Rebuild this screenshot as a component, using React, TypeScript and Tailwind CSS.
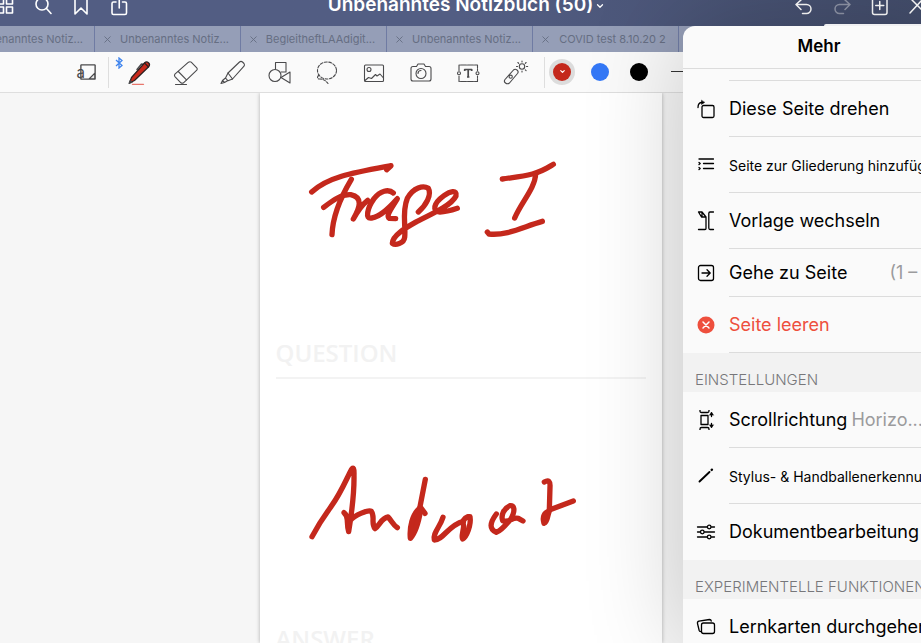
import type { ReactNode } from "react"
import { ChevronDown, X } from "lucide-react"

const tabs = [
  { id: 1, title: "Unbenanntes Notiz..." },
  { id: 2, title: "Unbenanntes Notiz..." },
  { id: 3, title: "BegleitheftLAAdigit..." },
  { id: 4, title: "Unbenanntes Notiz..." },
  { id: 5, title: "COVID test 8.10.20 2" },
]

function Icon({ size = 28, width = 1.1, children }: { size?: number; width?: number; children: ReactNode }) {
  return (
    <svg
      width={size}
      height={size}
      viewBox={`0 0 ${size} ${size}`}
      fill="none"
      stroke="currentColor"
      strokeWidth={width}
      strokeLinecap="round"
      strokeLinejoin="round"
      className="shrink-0"
      aria-hidden="true"
    >
      {children}
    </svg>
  )
}

const navLeft = [
  {
    label: "Übersicht",
    icon: (
      <>
        <rect x="5.5" y="5" width="6" height="6" />
        <rect x="14.5" y="5" width="6" height="6" />
        <rect x="5.5" y="14" width="6" height="6" />
        <rect x="14.5" y="14" width="6" height="6" />
      </>
    ),
  },
  {
    label: "Suchen",
    icon: (
      <>
        <circle cx="12" cy="11" r="6" />
        <path d="M16.500 15.500 21 20.500" />
      </>
    ),
  },
  { label: "Lesezeichen", icon: <path d="M7 2v19l6-6 6 6V2z" /> },
  {
    label: "Teilen",
    icon: (
      <>
        <path d="M10 9H7.500Q6 9 6 10.500V20q0 1.500 1.500 1.500h11.500q1.500 0 1.500-1.500v-9.500Q20.500 9 19 9h-2.500" />
        <path d="M13.250 15V2" />
      </>
    ),
  },
]

const navRight = [
  { label: "Rückgängig", icon: <path d="M10 7l-5 4.500 5 5M5.500 11.500h10a4.500 4.500 0 0 1 0 9h-4" /> },
  { label: "Wiederholen", dim: true, icon: <path d="M16 7l5 4.500-5 5M20.500 11.500h-10a4.500 4.500 0 0 0 0 9h4" /> },
  {
    label: "Seite hinzufügen",
    icon: (
      <>
        <path d="M5.500 4v15.500q0 2 2 2h10.500q2 0 2-2V4" />
        <path d="M12.750 8.500v8M8.750 12.500h8" />
      </>
    ),
  },
  { label: "Stiftmodus", icon: <path d="M5 20 19 5M7 7l13 13" /> },
]

const tools = [
  {
    label: "Stift",
    icon: (
      <>
        <path d="M19.500 5.500l-3-.5-4.500 5.500" strokeWidth="1.500" />
        <path d="M4.500 24l2-5.500L19.500 4q2-2 4-.2t.2 4L9.500 21.500z" fill="#c9291c" stroke="#2b2020" strokeWidth="1.200" />
        <path d="M4 24.500l1.200-3 2 1.800z" fill="#222" />
        <path d="M19.500 4l4 4" stroke="#2b2020" />
        <path d="M7.500 25.300h11" stroke="#e8766c" strokeWidth="1.300" />
      </>
    ),
  },
  {
    label: "Radierer",
    icon: (
      <>
        <path d="M16.500 3.200q1.500-1 2.700 0l5.600 5.600q1 1.200 0 2.400L11.500 23.800q-1.300 1-2.600 0l-6-6.200q-.9-1.200 0-2.400z" />
        <path d="M6.300 12.500l8.200 8.400M3.500 25.500h11" />
      </>
    ),
  },
  {
    label: "Textmarker",
    icon: (
      <>
        <path d="M9 14 20.500 3q1.500-1.300 3 0l1.500 1.500q1 1.300 0 2.700L13.500 20z" />
        <path d="M9 14l-2.500 5 2.500 2.800 4.500-1.800M6.500 19 3.500 21.500l2 2 3-1.700M3.500 21.500l-1.500 3 3.500-1" />
      </>
    ),
  },
  {
    label: "Formen",
    icon: (
      <>
        <path d="M9.500 10V3.500h10.500V13h-5" />
        <circle cx="9" cy="16.500" r="6" />
        <path d="M15 18.500l9-5.500v11z" />
      </>
    ),
  },
  {
    label: "Lasso",
    icon: (
      <>
        <ellipse cx="14" cy="11.500" rx="9.500" ry="8.500" strokeDasharray="2.800 1.600" />
        <path d="M6 16q-3 3 0 4 5-.5 9 4.500" strokeDasharray="3 1.500" />
      </>
    ),
  },
  {
    label: "Bild",
    icon: (
      <>
        <rect x="4.500" y="6" width="19" height="16.500" rx="1" />
        <circle cx="9" cy="10.500" r="2" />
        <path d="M5 21.500l3.500-3 3 1 4-4 1.500 1.500 3-2 3.500 4" />
      </>
    ),
  },
  {
    label: "Kamera",
    icon: (
      <>
        <path d="M6 7.500h3.500l1.500-2.500h6l1.500 2.500h3.500q2 0 2 2v10.500q0 2-2 2h-16q-2 0-2-2V9.500q0-2 2-2z" />
        <circle cx="14" cy="14.500" r="5" />
        <path d="M11 14.500q0-3 3-3" />
      </>
    ),
  },
  {
    label: "Text",
    icon: (
      <>
        <path d="M5 11.500V6h18.500v5.500M5 17v5.500h18.500V17" strokeDasharray="6 1" />
        <circle cx="5" cy="14.300" r="1.500" />
        <circle cx="23.500" cy="14.300" r="1.500" />
        <path d="M10.700 12v-1.500h7V12M14.200 10.500v7.500M13 18h2.400" strokeWidth="1.700" strokeLinecap="butt" />
      </>
    ),
  },
  {
    label: "Laserpointer",
    icon: (
      <>
        <path d="M4 20.500 12.500 11q1.500-1.500 3.500 0t.5 3.500L8.500 24q-2 1.500-4 0t-.5-3.500z" />
        <circle cx="9.700" cy="17.700" r="1.600" />
        <circle cx="21" cy="7.500" r="2.700" />
        <path d="M21 3V2M21 13v-1M25.500 7.500h1.200M15.500 7.500h1M24.300 4.300l.8-.8M17.700 4.300l-.8-.8M24.300 10.800l.8.8" />
      </>
    ),
  },
]

type Row = {
  label: string
  icon: ReactNode
  small?: boolean
  danger?: boolean
  short?: boolean
  plain?: boolean
  value?: string
  gap?: string
}

const pageRows: Row[] = [
  {
    label: "Diese Seite drehen",
    icon: (
      <>
        <rect x="6" y="6.500" width="12" height="12" rx="1.500" />
        <path d="M2 8.500Q2 3.500 6 3.500" />
        <path d="M5.500 1.500v4L8.500 3.500z" fill="currentColor" strokeWidth=".5" />
      </>
    ),
  },
  {
    label: "Seite zur Gliederung hinzufüg",
    small: true,
    icon: (
      <path d="M3 4h14.500M7.500 8.500h10M7.500 13.500h10M3 7.500l1.200 1L3 9.500M3 12.500l1.200 1L3 14.500" />
    ),
  },
  {
    label: "Vorlage wechseln",
    icon: (
      <>
        <path d="M2.500 1h3.500l4 5v11.500q0 1-1 1H2.500M6 1v5h4M2.500 1l3 5" />
        <path d="M17.500 1h-3.500q-1.200 0-1.200 1.500v14.500q0 1.500 1.200 1.500h3.500" />
      </>
    ),
  },
  {
    label: "Gehe zu Seite",
    short: true,
    value: "(1 – 2)",
    gap: "ml-[42px]",
    icon: (
      <>
        <rect x="2.500" y="2.500" width="15" height="15" rx="2" />
        <path d="M6 10h8M11 6.800l3.200 3.200-3.200 3.200" />
      </>
    ),
  },
  {
    label: "Seite leeren",
    danger: true,
    icon: (
      <>
        <circle cx="10" cy="10" r="8.500" fill="#ee4f3d" stroke="none" />
        <path d="M7 7l6 6M13 7l-6 6" stroke="#fff" strokeWidth="1.500" />
      </>
    ),
  },
]

const settingRows: Row[] = [
  {
    label: "Scrollrichtung",
    value: "Horizo...",
    gap: "ml-1",
    icon: (
      <>
        <rect x="5" y="5.500" width="7" height="9" />
        <path d="M4 0v1q0 1.500 1.500 1.500H11.500Q13 2.500 13 1V0M4 20v-1q0-1.500 1.500-1.500H11.500q1.500 0 1.500 1.500v1" />
        <path d="M15.500 3v3.500M15.500 13.500V17" />
        <path d="M13.500 5l2-3 2 3zM13.500 15l2 3 2-3z" fill="currentColor" strokeWidth=".4" />
      </>
    ),
  },
  {
    label: "Stylus- & Handballenerkennu",
    small: true,
    icon: (
      <>
        <path d="M3.500 15.500 13.500 6" strokeWidth="1.900" />
        <path d="M15.700 3.900l.2-.2" strokeWidth="2.400" />
      </>
    ),
  },
  {
    label: "Dokumentbearbeitung",
    plain: true,
    icon: (
      <>
        <path d="M1.500 5h9.500M15.500 5h3M1.500 10h2.500M8.500 10h10M1.500 15h9.500M15.500 15h3" />
        <circle cx="13.200" cy="5" r="1.800" />
        <circle cx="6.300" cy="10" r="1.800" />
        <circle cx="13.200" cy="15" r="1.800" />
      </>
    ),
  },
]

const labRows: Row[] = [
  {
    label: "Lernkarten durchgehen",
    icon: (
      <>
        <rect x="5.500" y="6" width="13" height="10.500" rx="2" />
        <path d="M4.500 14.500q-1 0-1.300-1L1.500 6.500q-.3-2 1.500-2.300l10.500-1.700q1.500 0 1.800 1.500" />
      </>
    ),
  },
]

function MenuRow({ row }: { row: Row }) {
  return (
    <li>
      <button
        type="button"
        className={`flex w-full items-stretch pl-[13px] text-left whitespace-nowrap ${row.short ? "h-12" : "h-14"} ${
          row.danger ? "text-[#ee4f3d]" : "text-black"
        }`}
      >
        <span className="flex w-[33px] shrink-0 items-center">
          <Icon size={20} width={1.3}>
            {row.icon}
          </Icon>
        </span>
        <span
          className={`flex flex-1 items-center border-b ${row.plain ? "border-transparent" : "border-[#dcdcdc]"} ${
            row.small ? "pt-0.5 text-[14px]" : "text-[18px]"
          }`}
        >
          {row.label}
          {row.value && <span className={`${row.gap} text-[#9b9b9d]`}>{row.value}</span>}
        </span>
      </button>
    </li>
  )
}

function SectionTitle({ children }: { children: ReactNode }) {
  return (
    <h3 className="flex h-[39px] items-end bg-[#f2f2f2] pb-0.5 pl-3 text-[15px] leading-5 font-light whitespace-nowrap text-[#77777a]">
      {children}
    </h3>
  )
}

function MoreMenu() {
  return (
    <aside className="absolute top-[26px] -right-[34px] bottom-0 z-10 w-[272px] rounded-tl-xl bg-[#fafafa] shadow-[0_0_100px_rgba(0,0,0,0.2)]">
      <div className="absolute -top-0.5 right-0 h-0.5 w-[131px] rounded-tl bg-[#f0f0f2]" />
      <div className="h-full overflow-hidden rounded-tl-xl">
        <h2 className="flex h-[43px] items-center justify-center border-b border-[#dcdcdc] text-[17px] font-semibold text-black">
          Mehr
        </h2>
        <div className="ml-[46px] h-3 border-b border-[#dcdcdc]" />
        <ul>
          {pageRows.map((row) => (
            <MenuRow key={row.label} row={row} />
          ))}
        </ul>
        <SectionTitle>EINSTELLUNGEN</SectionTitle>
        <ul>
          {settingRows.map((row) => (
            <MenuRow key={row.label} row={row} />
          ))}
        </ul>
        <SectionTitle>EXPERIMENTELLE FUNKTIONEN</SectionTitle>
        <ul>
          {labRows.map((row) => (
            <MenuRow key={row.label} row={row} />
          ))}
        </ul>
      </div>
    </aside>
  )
}

function Ink({ viewBox, children }: { viewBox: string; children: ReactNode }) {
  return (
    <svg
      viewBox={viewBox}
      className="block h-[240px] w-full"
      fill="none"
      stroke="#c4281c"
      strokeWidth="16"
      strokeLinecap="round"
      strokeLinejoin="round"
      aria-hidden="true"
    >
      {children}
    </svg>
  )
}

export default function App() {
  return (
    <div className="relative flex h-screen flex-col overflow-hidden bg-[#f6f6f6] font-[Inter,sans-serif]">
      <header className="h-[26px] shrink-0 overflow-hidden bg-linear-to-r from-[#525d83] from-50% to-[#434d6b] text-white">
        <nav className="-mt-4 grid h-[43px] grid-cols-[1fr_auto_1fr] items-center">
          <div className="-ml-3.5 flex">
            {navLeft.map((item) => (
              <button key={item.label} type="button" aria-label={item.label} className="flex w-[38px] justify-center">
                <Icon size={26} width={1.6}>
                  {item.icon}
                </Icon>
              </button>
            ))}
          </div>
          <h1 className="relative text-[19px] font-semibold whitespace-nowrap">
            Unbenanntes Notizbuch (50)
            <ChevronDown size={10} strokeWidth={3} className="absolute top-2.5 left-full ml-0.5" />
          </h1>
          <div className="-mr-4 flex justify-end">
            {navRight.map((item) => (
              <button
                key={item.label}
                type="button"
                aria-label={item.label}
                className={`flex w-[38px] justify-center ${item.dim ? "opacity-40" : ""}`}
              >
                <Icon size={26} width={1.5}>
                  {item.icon}
                </Icon>
              </button>
            ))}
          </div>
        </nav>
      </header>

      <div className="flex h-[26px] shrink-0 overflow-hidden bg-[#959eb7] text-[11px] text-[#666e83]">
        {tabs.map((tab) => (
          <button
            key={tab.id}
            type="button"
            className="flex w-[146px] shrink-0 items-center border-r border-[#6f7ba3] pr-1 pl-[7px] whitespace-nowrap first:-ml-[51px]"
          >
            <X size={11} className="shrink-0" />
            <span className="flex-1 text-center">{tab.title}</span>
          </button>
        ))}
      </div>

      <div className="flex h-[41px] shrink-0 items-center border-b border-[#dedede] bg-[#fafafa] pt-px pl-[73px] text-[#4a4a4c]">
        <button type="button" aria-label="Nur-Lese-Modus">
          <Icon>
            <path d="M8 6h14v14H8z" fill="#e9e9e9" />
            <path d="M8 6h14v8l-6 6H8z" fill="#fafafa" stroke="none" />
            <path d="M8 6h14v14H8zM22 14l-6 6" />
            <text x="3.500" y="18.500" fontSize="15" fill="currentColor" stroke="none">
              a
            </text>
          </Icon>
        </button>
        <span className="ml-[7px] h-[31px] w-px bg-[#dedede]" />
        <div className="relative ml-1.5 flex">
          <svg
            className="absolute -top-0.5 left-0"
            width="8"
            height="12"
            viewBox="0 0 8 12"
            fill="none"
            stroke="#3f84ee"
            strokeWidth="1.300"
            aria-hidden="true"
          >
            <path d="M1 3l6 5.500L4 11V1l3 2.500L1 9" />
          </svg>
          {tools.map((tool) => (
            <button key={tool.label} type="button" aria-label={tool.label} className="flex w-[47px] justify-center">
              <Icon>{tool.icon}</Icon>
            </button>
          ))}
        </div>
        <span className="ml-1.5 h-[31px] w-px bg-[#dedede]" />
        <div className="ml-1 flex items-center pb-0.5">
          <button type="button" aria-label="Rot" className="flex size-[26px] items-center justify-center rounded-full bg-[#dcdcdc]">
            <span className="flex size-[18px] items-center justify-center rounded-full bg-[#c4281c] text-white">
              <ChevronDown size={7} strokeWidth={4} />
            </span>
          </button>
          <button type="button" aria-label="Blau" className="ml-4 size-[18px] rounded-full bg-[#3478f6]" />
          <button type="button" aria-label="Schwarz" className="ml-[21px] size-[18px] rounded-full bg-black" />
          <span className="ml-[23px] h-px w-5 bg-[#333]" />
        </div>
      </div>

      <main className="flex flex-1 justify-center overflow-hidden">
        <article className="w-[402px] bg-white font-['Open_Sans',sans-serif] text-[24px] font-semibold text-[#f2f2f2] shadow-[0_0_4px_rgba(0,0,0,0.3)]">
          <Ink viewBox="-120 -171 1206 720">
            <path d="M35 126C85 80 160 68 273 47L260 59" />
            <path d="M154 88C120 145 98 200 96 254" />
            <path d="M71 172C100 150 125 132 152 134C190 142 180 172 160 207C172 185 185 165 203 151" />
            <path d="M280 129C266 116 240 122 222 146C202 174 194 209 215 204C245 200 275 165 292 146C280 168 255 198 268 205L287 206" />
            <path d="M355 186C378 165 396 135 385 115C370 105 340 112 322 145C305 185 318 230 314 262C312 282 285 286 277 280C278 255 320 232 350 215C400 190 455 165 468 138C472 118 450 124 432 137C400 160 395 185 420 186Q440 186 472 175" />
            <path d="M607 87C640 82 665 80 697 72C725 65 740 55 760 43" />
            <path d="M707 72C705 115 665 155 644 204" />
            <path d="M562 246L567 252C620 258 670 230 727 214" />
          </Ink>
          <h2 className="mx-4 flex h-[46px] items-center border-b-2 border-[#f3f3f3] pb-1">QUESTION</h2>
          <Ink viewBox="-120 -213 1206 720">
            <path d="M36 260C60 215 75 195 93 170C125 125 140 85 154 59Q163 45 162 75C163 130 155 190 146 245C138 220 148 200 132 188L150 212C165 195 205 178 214 184C226 200 212 220 225 236C240 225 245 203 264 201C275 212 280 226 292 233" />
            <path d="M376 88L360 170L375 190" />
            <path d="M358 175C337 195 328 230 331 265C345 250 356 215 362 180z" fill="#c4281c" />
            <path d="M429 202C420 232 398 248 403 270C430 270 445 225 490 214" />
            <path d="M503 200C490 205 487 215 491 228C490 245 483 260 488 267C500 260 514 225 510 200z" />
            <path d="M589 192C568 220 568 238 589 247C608 240 620 220 632 208C648 180 642 165 630 167C612 175 602 195 608 212C630 220 635 200 655 205L669 213" />
            <path d="M733 96C746 88 751 95 750 110L748 180L820 153" />
            <path d="M748 183C728 190 728 205 732 220C744 216 742 195 748 183z" fill="#c4281c" />
          </Ink>
          <h2 className="mx-4 flex h-10 items-center">ANSWER</h2>
        </article>
      </main>

      <MoreMenu />
    </div>
  )
}
